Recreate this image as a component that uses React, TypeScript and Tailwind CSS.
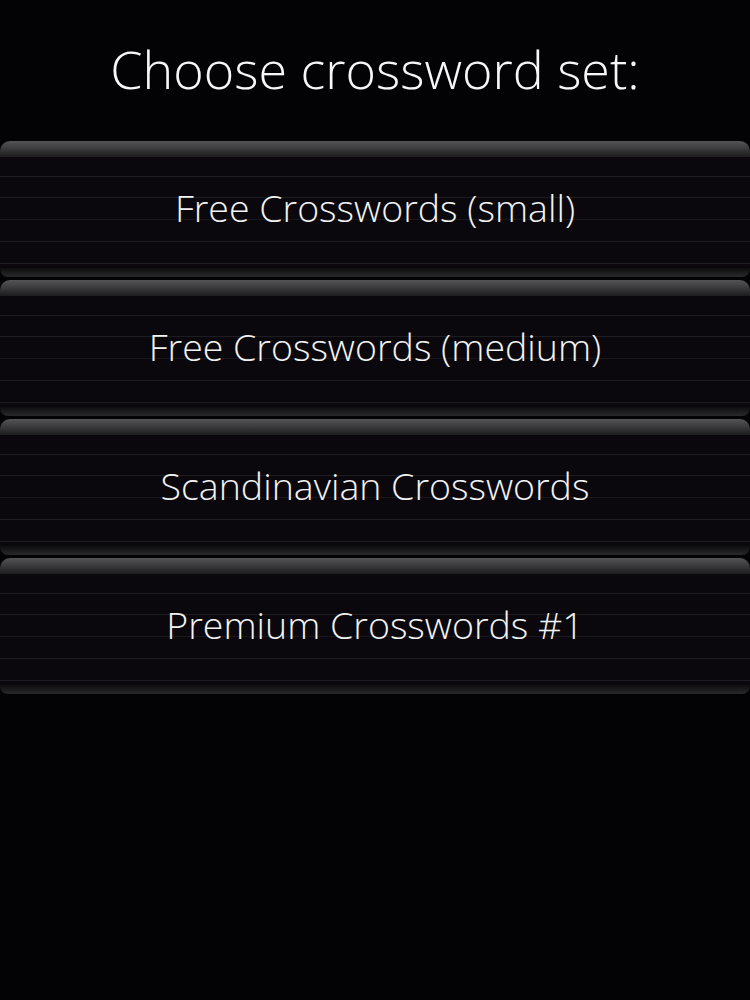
const sets = [
  "Free Crosswords (small)",
  "Free Crosswords (medium)",
  "Scandinavian Crosswords",
  "Premium Crosswords #1",
];

function SetButton({ label }: { label: string }) {
  return (
    <button className="grid h-[136px] w-full text-left">
      <div className="col-start-1 row-start-1 flex flex-col">
        <div className="h-[16px] rounded-t-[10px] bg-gradient-to-b from-[#545456] via-[#3a3a3c] to-[#1c1c1e]" />
        <div className="flex flex-1 flex-col bg-[#0a080c]">
          <div className="h-[20px] border-b border-[#1d1c20]" />
          <div className="h-[21px] border-b border-[#1d1c20]" />
          <div className="h-[22px] border-b border-[#18171b]" />
          <div className="h-[22px] border-b border-[#1d1c20]" />
          <div className="h-[22px] border-b border-[#1d1c20]" />
          <div className="flex-1" />
        </div>
        <div className="h-[9px] rounded-b-[8px] bg-gradient-to-b from-[#0e0d10] to-[#29292b]" />
      </div>
      <div className="col-start-1 row-start-1 flex items-center justify-center pb-[2px] text-[37.5px] font-light text-[#f2f2f2]">
        {label}
      </div>
    </button>
  );
}

export default function App() {
  return (
    <div className="min-h-[1000px] w-[750px] bg-[#030205] font-['Open_Sans',sans-serif]">
      <h1 className="pt-[33px] pb-[36px] text-center text-[52px] font-light leading-[72px] text-[#f7f7f7]">
        Choose crossword set:
      </h1>
      <div className="flex flex-col gap-[3px]">
        {sets.map((s) => (
          <SetButton key={s} label={s} />
        ))}
      </div>
    </div>
  );
}
